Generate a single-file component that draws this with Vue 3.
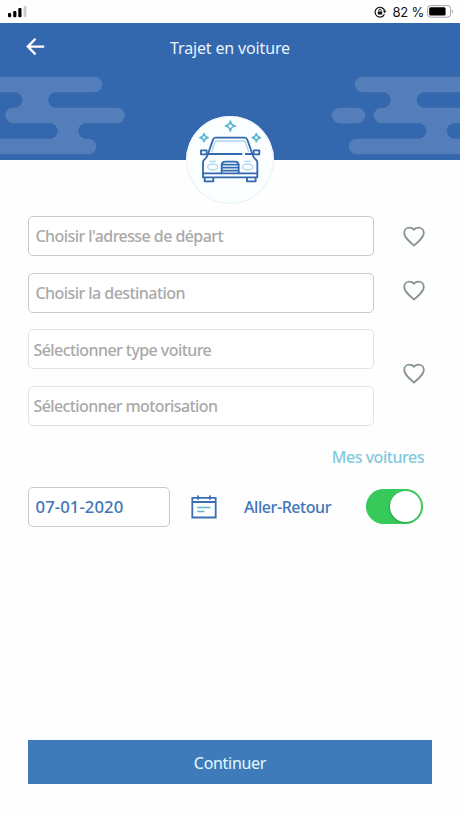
<script setup>
import { ref } from 'vue'

const roundTrip = ref(true)
const heart = 'M12 20.6 10.7 19.4C5.5 14.7 2.2 11.7 2.2 7.9 2.2 4.9 4.5 2.6 7.5 2.6c1.7 0 3.4.8 4.5 2.1 1.1-1.3 2.8-2.1 4.5-2.1 3 0 5.3 2.3 5.3 5.3 0 3.8-3.3 6.8-8.5 11.5Z'
</script>

<template>
  <div class="screen">
    <div class="status">
      <svg class="signal" width="20" height="12" viewBox="0 0 20 12">
        <rect x="0" y="7" width="3.2" height="4.2" rx="1" />
        <rect x="5.2" y="5" width="3.2" height="6.2" rx="1" />
        <rect x="10.3" y="2" width="3.2" height="9.2" rx="1" />
        <rect x="15.6" y="0" width="2.8" height="11.2" rx="1" fill="#ccc" />
      </svg>
      <div class="status-right">
        <svg width="13" height="12" viewBox="0 0 13 12">
          <path d="M10.4 8.2A4.9 4.9 0 1 1 10.7 5" fill="none" stroke="#111" stroke-width="1.2" />
          <path d="M8.8 4.8h3.6l-1.7 2.4Z" fill="#111" />
          <rect x="3.8" y="5.4" width="4.4" height="3.2" rx=".5" fill="#111" />
          <path d="M4.8 5.5V4.4a1.2 1.2 0 0 1 2.4 0v1.1" fill="none" stroke="#111" stroke-width=".9" />
        </svg>
        <span class="percent">82 %</span>
        <svg width="27" height="13" viewBox="0 0 27 13">
          <rect x=".6" y=".6" width="23" height="11.6" rx="3" fill="#fff" stroke="#a99da9" />
          <rect x="2.2" y="2.2" width="16.4" height="8.4" rx="1.5" />
          <path d="M25 4.4q2 2 0 4Z" fill="#a99da9" />
        </svg>
      </div>
    </div>

    <header class="header">
      <svg class="clouds" width="460" height="137" viewBox="0 23 460 137">
        <g fill="#547eba">
          <path d="M0 76.800H94.500a7.750 7.750 0 0 1 0 15.500H56a7.750 7.750 0 0 0 0 15.500H117a7.750 7.750 0 0 1 0 15.500H86a7.750 7.750 0 0 0 0 15.500H88.500a7.750 7.750 0 0 1 0 15.500H0V138.800H50a7.750 7.750 0 0 0 0-15.500H13a7.750 7.750 0 0 1 0-15.500H14.500a7.750 7.750 0 0 0 0-15.500H0Z" />
          <path d="M460 76.800H362.500a7.750 7.750 0 0 0 0 15.500H383a7.750 7.750 0 0 1 0 15.500H381.500a7.750 7.750 0 0 0 0 15.500H418.500a7.750 7.750 0 0 1 0 15.500H356.500a7.750 7.750 0 0 0 0 15.500H460V138.800H454.500a7.750 7.750 0 0 1 0-15.500H460V107.800H424.500a7.750 7.750 0 0 1 0-15.500H460Z" />
          <rect x="332" y="107.800" width="33.300" height="15.600" rx="7.800" />
        </g>
      </svg>
      <svg class="back" width="20" height="20" viewBox="0 0 20 20">
        <path d="M18.200 9.600H2.500M9.500 1.700 1.800 9.600l7.700 7.800" fill="none" stroke="#fff" stroke-width="2.300" />
      </svg>
      <h1 class="title">Trajet en voiture</h1>
      <div class="badge">
        <svg width="88" height="88" viewBox="18 18 264 264" fill="none">
          <g stroke="#5bb5d3" stroke-width="5" stroke-linejoin="round">
            <path d="M151 33q2 13 15 15-13 2-15 15-2-13-15-15 13-2 15-15Z" />
            <path d="M72 71q2 10 12 12-10 2-12 12-2-10-12-12 10-2 12-12Z" />
            <path d="M229 71q2 10 12 12-10 2-12 12-2-10-12-12 10-2 12-12Z" />
          </g>
          <g stroke="#add8ee" stroke-width="4">
            <path d="M95 126l11-33H195l11 33" />
            <ellipse cx="98" cy="171" rx="15" ry="9" />
            <ellipse cx="203" cy="171" rx="15" ry="9" />
            <path d="M88 154h20M193 154h20" />
          </g>
          <g stroke="#3268ae" stroke-width="5.500" stroke-linejoin="round">
            <path d="M84 132l15-43q2-6 8-6h87q6 0 8 6l15 43M84 132H187M195 132h22" />
            <path d="M84 132q-4 13-12 18-3 3-3 8v44H232v-44q0-5-3-8-8-5-12-18M69 190H232" />
            <path d="M80 121H63v12h17ZM221 121h17v12h-17Z" />
            <path d="M74 202v12h26v-12M201 202v12h26v-12" />
            <path d="M125 190v-27q2-8 11-8h30q8 0 10 8v27M126 164h50M125 173h51M125 182h51" />
          </g>
        </svg>
      </div>
    </header>

    <main class="form">
      <div class="line">
        <div class="field"><span class="departure">Choisir l'adresse de départ</span></div>
        <svg class="heart" width="24" height="23" viewBox="0 0 24 23"><path :d="heart" /></svg>
      </div>
      <div class="line">
        <div class="field"><span class="destination">Choisir la destination</span></div>
        <svg class="heart raised" width="24" height="23" viewBox="0 0 24 23"><path :d="heart" /></svg>
      </div>
      <div class="line">
        <div class="selects">
          <div class="field select"><span class="type">Sélectionner type voiture</span></div>
          <div class="field select"><span class="engine">Sélectionner motorisation</span></div>
        </div>
        <svg class="heart grouped" width="24" height="23" viewBox="0 0 24 23"><path :d="heart" /></svg>
      </div>
      <a class="cars">Mes voitures</a>
      <div class="options">
        <div class="field date"><span>07-01-2020</span></div>
        <svg class="calendar" width="26" height="24" viewBox="0 0 26 24" fill="none">
          <path d="M1.300 2.800H24.700V22.500H1.300ZM1.300 7H24.700M7 .4v4.400M19 .4v4.400" stroke="#3a70b2" stroke-width="1.800" />
          <path d="M6 12.500H19.500M6 16.500H13.500" stroke="#5fb9d3" stroke-width="1.400" />
        </svg>
        <span class="return">Aller-Retour</span>
        <button class="toggle" :class="{ on: roundTrip }" @click="roundTrip = !roundTrip"><i></i></button>
      </div>
    </main>

    <button class="continue"><span>Continuer</span></button>
  </div>
</template>

<style>
body { margin: 0; background: #fefefe; }
</style>

<style scoped>
.screen {
  box-sizing: border-box;
  width: 460px;
  height: 818px;
  padding-bottom: 34px;
  display: flex;
  flex-direction: column;
  overflow: hidden;
  background: #fefefe;
  font-family: "Noto Sans", "Open Sans", sans-serif;
  white-space: nowrap;
}
.status {
  height: 23px;
  flex: none;
  box-sizing: border-box;
  padding: 0 6px 0 8px;
  display: flex;
  justify-content: space-between;
  align-items: center;
}
.signal { margin-top: 1px; }
.status-right { display: flex; align-items: center; }
.percent {
  margin: 1px 3px 0 5px;
  font: 13px/16px Inter, sans-serif;
  letter-spacing: -0.2px;
  color: #111;
}
.header {
  position: relative;
  flex: none;
  height: 137px;
  background: #3367ae;
  display: flex;
  justify-content: center;
}
.clouds { position: absolute; inset: 0; }
.back { position: absolute; left: 26px; top: 14px; }
.title {
  position: relative;
  margin: 13px 0 0;
  height: 24px;
  font-size: 16px;
  line-height: 24px;
  font-weight: 400;
  letter-spacing: -0.15px;
  color: #e9f4ff;
}
.badge {
  position: absolute;
  left: 186px;
  top: 93px;
  width: 88px;
  height: 88px;
  border-radius: 50%;
  background: #fbfeff;
  box-shadow: inset 0 0 0 1px #e9f2f4;
}
.badge svg { display: block; }
.form {
  padding: 56px 34px 0 28px;
  display: flex;
  flex-direction: column;
  gap: 16.600px;
}
.line { display: flex; justify-content: space-between; align-items: center; }
.field {
  box-sizing: border-box;
  width: 346px;
  height: 40px;
  padding: 0 6.500px;
  border: 1px solid #c9c9c9;
  border-radius: 5px;
  display: flex;
  align-items: center;
  background: #fff;
  font-size: 16px;
  font-weight: 500;
  color: #a9a9a9;
}
.selects { display: flex; flex-direction: column; gap: 16.600px; }
.select { padding: 1px 4.500px 0; border-color: #e3e3e3; }
.heart { margin: 1px 0 0; }
.heart path { fill: none; stroke: #869496; stroke-width: 1.8; }
.raised { margin-top: -5px; }
.grouped { margin-top: -8px; }
.departure { letter-spacing: -0.56px; }
.destination { letter-spacing: -0.56px; }
.type { letter-spacing: -0.57px; }
.engine { letter-spacing: -0.6px; }
.cars {
  align-self: flex-end;
  margin: 3px 2px 0 0;
  line-height: 24px;
  font-size: 16px;
  font-weight: 500;
  letter-spacing: -0.47px;
  color: #7fc9dc;
}
.options { display: flex; align-items: center; margin-top: 1px; }
.date { width: 142px; color: #3e76b8; letter-spacing: 0.08px; font-size: 16.700px; }
.calendar { margin-left: 21px; }
.return {
  margin-left: 27px;
  font-size: 16px;
  font-weight: 500;
  letter-spacing: -0.43px;
  width: 88px;
  color: #3e76b8;
}
.toggle {
  margin-left: auto;
  margin-right: 3px;
  width: 57px;
  height: 35px;
  padding: 2px;
  border: 0;
  border-radius: 18px;
  background: #ddd;
  display: flex;
}
.toggle.on { background: #37ca5b; justify-content: flex-end; }
.toggle i {
  width: 31px;
  height: 31px;
  border-radius: 50%;
  background: #fff;
  box-shadow: -1px 1px 2px rgba(0, 0, 0, 0.18);
}
.continue {
  margin: auto 28px 0;
  flex: none;
  height: 44px;
  padding: 2px 0 0;
  border: 0;
  background: #3f7bba;
  color: #e3fbff;
  font: 400 16px/24px "Noto Sans", sans-serif;
  letter-spacing: -0.3px;
}
</style>
